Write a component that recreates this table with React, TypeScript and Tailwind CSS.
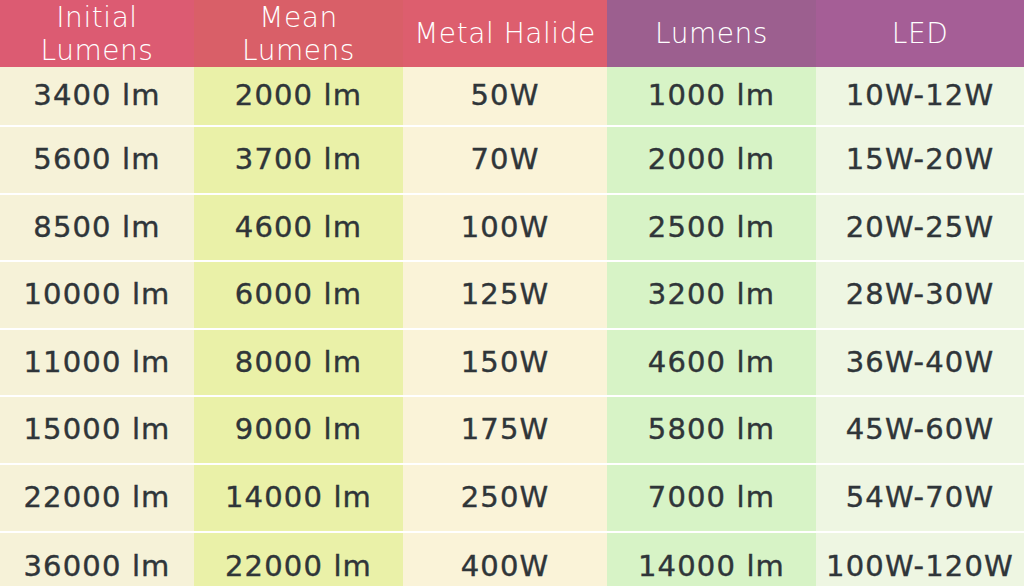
const headers = [
  { label: ['Initial', 'Lumens'], bg: 'bg-[#dc5b72]' },
  { label: ['Mean', 'Lumens'], bg: 'bg-[#d95f68]' },
  { label: ['Metal Halide'], bg: 'bg-[#dd5e6e]' },
  { label: ['Lumens'], bg: 'bg-[#9c5f8f]' },
  { label: ['LED'], bg: 'bg-[#a55e96]' },
];

const cellBgs = [
  'bg-[#f6f2d8]',
  'bg-[#eaf1a8]',
  'bg-[#faf3d8]',
  'bg-[#d7f3c6]',
  'bg-[#eef6e2]',
];

const widths = ['w-[194px]', 'w-[209px]', 'w-[204px]', 'w-[209px]', 'flex-1'];

const rows = [
  ['3400 lm', '2000 lm', '50W', '1000 lm', '10W-12W'],
  ['5600 lm', '3700 lm', '70W', '2000 lm', '15W-20W'],
  ['8500 lm', '4600 lm', '100W', '2500 lm', '20W-25W'],
  ['10000 lm', '6000 lm', '125W', '3200 lm', '28W-30W'],
  ['11000 lm', '8000 lm', '150W', '4600 lm', '36W-40W'],
  ['15000 lm', '9000 lm', '175W', '5800 lm', '45W-60W'],
  ['22000 lm', '14000 lm', '250W', '7000 lm', '54W-70W'],
  ['36000 lm', '22000 lm', '400W', '14000 lm', '100W-120W'],
];

const rowHeights = [
  'h-[58px]',
  'h-[66px]',
  'h-[65px]',
  'h-[66px]',
  'h-[65px]',
  'h-[66px]',
  'h-[66px]',
  'h-[67px]',
];

export default function App() {
  return (
    <div
      className="w-[1024px] h-[586px] overflow-hidden bg-white flex flex-col"
      style={{ fontFamily: '"DejaVu Sans", sans-serif' }}
    >
      <div className="flex h-[67px] shrink-0">
        {headers.map((h, i) => (
          <div
            key={i}
            className={`${widths[i]} ${h.bg} flex flex-col items-center justify-center text-white font-extralight text-[28px] leading-[33px] tracking-[0.02em]`}
          >
            {h.label.map((l) => (
              <span key={l}>{l}</span>
            ))}
          </div>
        ))}
      </div>
      <div className="flex flex-col gap-[2px] shrink-0">
        {rows.map((r, ri) => (
          <div key={ri} className={`flex shrink-0 ${rowHeights[ri]}`}>
            {r.map((c, ci) => (
              <div
                key={ci}
                className={`${widths[ci]} ${cellBgs[ci]} flex items-center justify-center text-[#2f3539] text-[29px] tracking-[0.04em] [-webkit-text-stroke:0.4px_#2f3539]`}
              >
                {c}
              </div>
            ))}
          </div>
        ))}
      </div>
    </div>
  );
}
